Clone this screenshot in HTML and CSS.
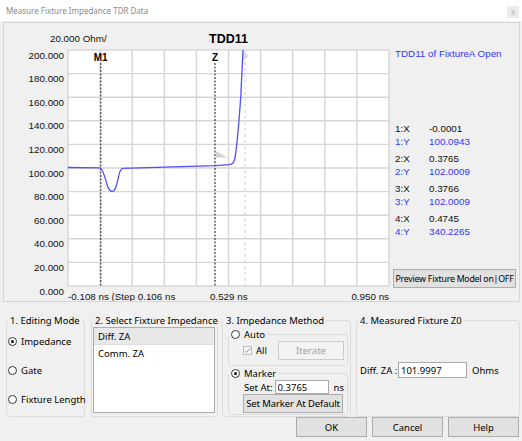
FILE: index.html
```html
<!DOCTYPE html>
<html>
<head>
<meta charset="utf-8">
<title>Measure Fixture Impedance TDR Data</title>
<link rel="stylesheet" href="styles.css">
</head>
<body>
<div class="titlebar">
  <span class="title">Measure Fixture Impedance TDR Data</span>
  <span class="close">x</span>
</div>

<div class="panel">
  <svg class="chart" viewBox="4 23 388 278" width="388" height="278" xmlns="http://www.w3.org/2000/svg">
    <text class="axis" x="50" y="41.5">20.000 Ohm/</text>
    <text class="plot-title" x="209" y="43">TDD11</text>

    <rect x="68" y="50" width="321" height="236" fill="#fff"/>
    <g class="grid">
      <line x1="68" y1="73.6" x2="389" y2="73.6"/>
      <line x1="68" y1="97.2" x2="389" y2="97.2"/>
      <line x1="68" y1="120.8" x2="389" y2="120.8"/>
      <line x1="68" y1="144.4" x2="389" y2="144.4"/>
      <line x1="68" y1="168" x2="389" y2="168"/>
      <line x1="68" y1="191.6" x2="389" y2="191.6"/>
      <line x1="68" y1="215.2" x2="389" y2="215.2"/>
      <line x1="68" y1="238.8" x2="389" y2="238.8"/>
      <line x1="68" y1="262.4" x2="389" y2="262.4"/>
      <line x1="100.1" y1="50" x2="100.1" y2="286"/>
      <line x1="132.2" y1="50" x2="132.2" y2="286"/>
      <line x1="164.3" y1="50" x2="164.3" y2="286"/>
      <line x1="196.4" y1="50" x2="196.4" y2="286"/>
      <line x1="228.5" y1="50" x2="228.5" y2="286"/>
      <line x1="260.6" y1="50" x2="260.6" y2="286"/>
      <line x1="292.7" y1="50" x2="292.7" y2="286"/>
      <line x1="324.8" y1="50" x2="324.8" y2="286"/>
      <line x1="356.9" y1="50" x2="356.9" y2="286"/>
      <rect x="68" y="50" width="321" height="236" fill="none"/>
    </g>

    <g class="axis" text-anchor="end">
      <text x="64" y="58.5">200.000</text>
      <text x="64" y="82.1">180.000</text>
      <text x="64" y="105.7">160.000</text>
      <text x="64" y="129.3">140.000</text>
      <text x="64" y="152.9">120.000</text>
      <text x="64" y="176.5">100.000</text>
      <text x="64" y="200.1">80.000</text>
      <text x="64" y="223.7">60.000</text>
      <text x="64" y="247.3">40.000</text>
      <text x="64" y="270.9">20.000</text>
      <text x="64" y="294.5">0.000</text>
    </g>
    <text class="axis" x="68" y="300">-0.108 ns (Step 0.106 ns</text>
    <text class="axis" x="210" y="300">0.529 ns</text>
    <text class="axis" x="389" y="300" text-anchor="end">0.950 ns</text>

    <line class="ghost" x1="245" y1="50" x2="245" y2="286"/>
    <polygon points="243,51 249,56 243,61" fill="#dedede"/>
    <polygon points="216,151 227,157.5 216,157.5" fill="#d2d2d2"/>

    <line class="marker" x1="100.7" y1="63" x2="100.7" y2="286"/>
    <line class="marker" x1="215" y1="63" x2="215" y2="286"/>
    <text class="mlabel" x="100.7" y="61">M1</text>
    <text class="mlabel" x="215" y="61">Z</text>

    <path class="curve" d="M68,167.5 L100,167.8 C103,168.2 105,178 107.5,186 C109,190.5 110.5,191.5 112.5,191.5 C115,191.5 116.5,187 118.5,177 C119.5,171 120.5,168.5 123,168.3 L215,165.6 L229,164.6 C232.5,164.2 234,163 235,158 C236.8,147 239,122 240.8,96 L243,50"/>
  </svg>

  <div class="side">
    <div class="legend-title blue">TDD11 of FixtureA Open</div>
    <div class="readouts">
      <div class="pair"><span>1:X</span><span>-0.0001</span><span class="blue">1:Y</span><span class="blue">100.0943</span></div>
      <div class="pair"><span>2:X</span><span>0.3765</span><span class="blue">2:Y</span><span class="blue">102.0009</span></div>
      <div class="pair"><span>3:X</span><span>0.3766</span><span class="blue">3:Y</span><span class="blue">102.0009</span></div>
      <div class="pair"><span>4:X</span><span>0.4745</span><span class="blue">4:Y</span><span class="blue">340.2265</span></div>
    </div>
    <button class="btn preview">Preview Fixture Model on|OFF</button>
  </div>
</div>

<div class="groups">
  <fieldset class="group g1">
    <legend>1. Editing Mode</legend>
    <div class="radios">
      <div class="opt"><span class="radio on"></span><span>Impedance</span></div>
      <div class="opt"><span class="radio"></span><span>Gate</span></div>
      <div class="opt"><span class="radio"></span><span>Fixture Length</span></div>
    </div>
  </fieldset>

  <fieldset class="group g2">
    <legend>2. Select Fixture Impedance</legend>
    <div class="list">
      <div class="item sel">Diff. ZA</div>
      <div class="item">Comm. ZA</div>
    </div>
  </fieldset>

  <fieldset class="group g3">
    <legend>3. Impedance Method</legend>
    <fieldset class="sub">
      <legend><span class="opt"><span class="radio"></span><span>Auto</span></span></legend>
      <div class="chkrow">
        <span class="check"><svg viewBox="0 0 9 9" width="7" height="7"><path d="M1,4.6 L3.4,7 L8,1.6" fill="none" stroke="#8c8c8c" stroke-width="1.2"/></svg></span>
        <span class="dis-label">All</span>
        <button class="btn iterate" disabled>Iterate</button>
      </div>
    </fieldset>
    <fieldset class="sub">
      <legend><span class="opt"><span class="radio on"></span><span>Marker</span></span></legend>
      <div class="setrow">
        <span>Set At:</span>
        <input class="field setat" type="text" value="0.3765">
        <span class="unit">ns</span>
      </div>
      <button class="btn setdef">Set Marker At Default</button>
    </fieldset>
  </fieldset>

  <fieldset class="group g4">
    <legend>4. Measured Fixture Z0</legend>
    <div class="z0row">
      <span class="z0label">Diff. ZA :</span>
      <input class="field z0" type="text" value="101.9997">
      <span class="ohms">Ohms</span>
    </div>
  </fieldset>
</div>

<div class="actions">
  <button class="btn act">OK</button>
  <button class="btn act">Cancel</button>
  <button class="btn act">Help</button>
</div>
</body>
</html>
```

FILE: styles.css
```css
* { box-sizing: border-box; }

html, body {
  margin: 0;
  padding: 0;
}

body {
  width: 522px;
  height: 441px;
  overflow: hidden;
  background: #f0f0f0;
  font-family: "Noto Sans", "Open Sans", sans-serif;
  font-size: 9.5px;
  color: #000;
}

/* title bar */
.titlebar {
  height: 21px;
  background: #fff;
  display: flex;
  align-items: flex-start;
  justify-content: space-between;
  padding: 0 3px 0 6px;
}

.title {
  color: #8a8a8a;
  font-size: 8px;
  line-height: 21px;
}

.close {
  margin-top: 6px;
  width: 12px;
  height: 12px;
  background: #ebebeb;
  color: #b4b4b4;
  font-size: 8px;
  line-height: 11px;
  text-align: center;
}

/* chart panel */
.panel {
  margin: 1px 2px 0 3px;
  height: 280px;
  border: 1px solid #d6d6d6;
  display: flex;
}

.chart {
  display: block;
  flex: none;
  width: 388px;
  height: 278px;
}

.chart .axis,
.chart text {
  font-family: "Liberation Sans", Arial, sans-serif;
  font-size: 9.8px;
  fill: #111;
}

.chart .plot-title {
  font-size: 12.5px;
  font-weight: bold;
  fill: #000;
}

.chart .mlabel {
  font-size: 10px;
  font-weight: bold;
  text-anchor: middle;
  fill: #000;
}

.grid line,
.grid rect {
  stroke: #d5d5d5;
  stroke-width: 1.4;
}

.marker {
  stroke: #4a4a4a;
  stroke-width: 1.3;
  stroke-dasharray: 2 1.5;
}

.ghost {
  stroke: #d0d0d0;
  stroke-width: 1;
  stroke-dasharray: 3 3;
}

.curve {
  fill: none;
  stroke: #4f4fff;
  stroke-width: 1.3;
}

.side {
  flex: 1;
  display: flex;
  flex-direction: column;
  padding-left: 3px;
  font-family: "Liberation Sans", Arial, sans-serif;
  font-size: 9.8px;
  color: #111;
}

.blue { color: #3535ff; }

.legend-title {
  margin-top: 24px;
  line-height: 13px;
}

.readouts {
  margin-top: 62px;
  display: flex;
  flex-direction: column;
  gap: 4px;
}

.pair {
  display: grid;
  grid-template-columns: 34px auto;
  line-height: 13px;
}

/* buttons */
.btn {
  font-family: "Noto Sans", "Open Sans", sans-serif;
  font-size: 9.5px;
  color: #000;
  background: #e1e1e1;
  border: 1px solid #adadad;
  border-radius: 0;
  padding: 0;
  margin: 0;
}

.preview {
  margin: auto 0 13px -2px;
  width: 123px;
  height: 19px;
  font-size: 8.8px;
  letter-spacing: -0.25px;
  white-space: nowrap;
  overflow: hidden;
}

/* groups */
.groups {
  display: flex;
  margin-top: 12px;
  padding-left: 6px;
  height: 103px;
}

.group {
  margin: 0;
  padding: 0;
  min-width: 0;
  height: 103px;
  border: 1px solid #dcdcdc;
  border-radius: 3px;
}

legend {
  padding: 0 2px;
  margin-left: 1px;
  line-height: 13px;
  white-space: nowrap;
}

.g1 { width: 79px; }
.g2 { width: 127px; margin-left: 6px; }
.g3 { width: 129px; margin-left: 4px; }
.g4 { width: 164px; margin-left: 5px; }

.radios {
  display: flex;
  flex-direction: column;
  gap: 15px;
  padding: 7px 0 0 1px;
}

.opt {
  display: flex;
  align-items: center;
  gap: 4px;
  height: 14px;
  white-space: nowrap;
}

.radio {
  flex: none;
  width: 9px;
  height: 9px;
  border: 1px solid #3a3a3a;
  border-radius: 50%;
  background: #fff;
  display: flex;
  align-items: center;
  justify-content: center;
}

.radio.on::after {
  content: "";
  width: 3px;
  height: 3px;
  border-radius: 50%;
  background: #111;
}

.list {
  margin-left: 1px;
  width: 122px;
  height: 86px;
  background: #fff;
  border: 1px solid #adadad;
}

.item {
  height: 17px;
  line-height: 17px;
  padding-left: 4px;
}

.item.sel {
  background: #e8e8e8;
  border-bottom: 1px solid #dedede;
}

.sub {
  margin: 0 2px 0 5px;
  padding: 0;
  min-width: 0;
  border: 1px solid #dcdcdc;
  border-radius: 3px;
}

.sub legend {
  margin-left: 0;
}

.chkrow {
  display: flex;
  align-items: center;
  height: 19px;
  padding-left: 14px;
  margin-bottom: 5px;
}

.check {
  flex: none;
  width: 9px;
  height: 9px;
  border: 1px solid #bcbcbc;
  background: #f8f8f8;
  display: flex;
  align-items: center;
  justify-content: center;
}

.dis-label {
  margin-left: 4px;
}

.iterate {
  margin-left: auto;
  margin-right: 3px;
  width: 66px;
  height: 19px;
  background: #f3f3f3;
  border-color: #cccccc;
  color: #a0a0a0;
}

.setrow {
  display: flex;
  align-items: center;
  height: 14px;
  padding-left: 15px;
}

.field {
  font-family: "Noto Sans", "Open Sans", sans-serif;
  font-size: 9.5px;
  color: #000;
  background: #fff;
  border: 1px solid #a8a8a8;
  border-radius: 0;
  padding: 0 2px;
  margin: 0;
  outline: none;
}

.setat {
  margin-left: auto;
  width: 54px;
  height: 14px;
}

.unit {
  margin-left: 5px;
  margin-right: 3px;
}

.setdef {
  display: block;
  margin: 0 0 1px 14px;
  width: 100px;
  height: 19px;
  letter-spacing: -0.1px;
}

.z0row {
  display: flex;
  align-items: center;
  margin-top: 35px;
  padding-left: 3px;
  height: 16px;
}

.z0label {
  width: 38px;
  white-space: nowrap;
}

.z0 {
  width: 69px;
  height: 16px;
}

.ohms {
  margin-left: 5px;
}

/* dialog buttons */
.actions {
  display: flex;
  justify-content: flex-end;
  gap: 5px;
  padding-right: 3px;
}

.act {
  width: 71px;
  height: 20px;
}
```
